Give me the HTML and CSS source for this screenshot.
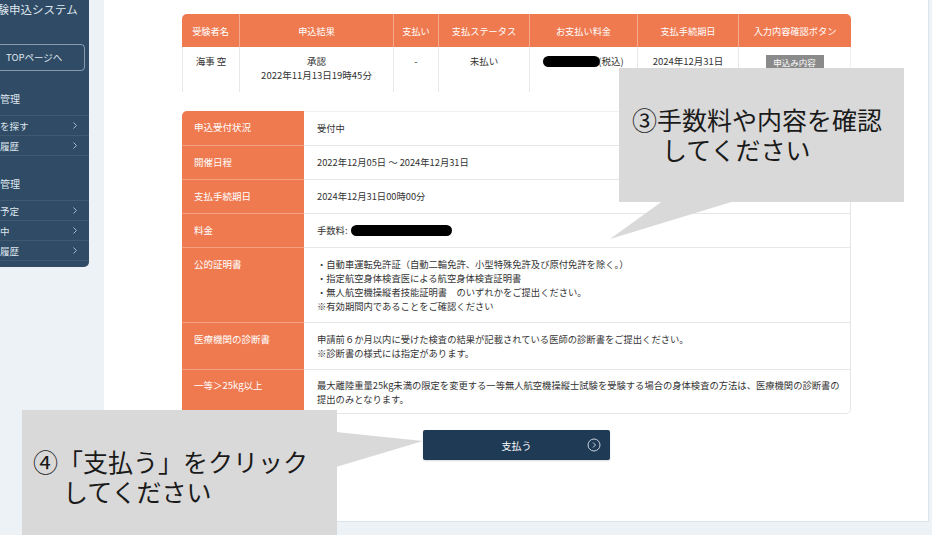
FILE: index.html
```html
<!DOCTYPE html>
<html lang="ja">
<head>
<meta charset="utf-8">
<title>試験申込システム</title>
<link rel="stylesheet" href="styles.css">
</head>
<body>
<div class="page">
  <aside class="sidebar">
    <div class="sidebar-inner">
      <div class="brand">試験申込システム</div>
      <a class="top-btn">TOPページへ</a>
      <div class="nav-heading">申込管理</div>
      <ul class="nav-list">
        <li><span>試験を探す</span><svg class="chev" viewBox="0 0 4 7" width="4" height="7"><polyline points="0.5,0.5 3.5,3.5 0.5,6.5"/></svg></li>
        <li><span>申込履歴</span><svg class="chev" viewBox="0 0 4 7" width="4" height="7"><polyline points="0.5,0.5 3.5,3.5 0.5,6.5"/></svg></li>
      </ul>
      <div class="nav-heading">受験管理</div>
      <ul class="nav-list">
        <li><span>受験予定</span><svg class="chev" viewBox="0 0 4 7" width="4" height="7"><polyline points="0.5,0.5 3.5,3.5 0.5,6.5"/></svg></li>
        <li><span>申込中</span><svg class="chev" viewBox="0 0 4 7" width="4" height="7"><polyline points="0.5,0.5 3.5,3.5 0.5,6.5"/></svg></li>
        <li><span>受験履歴</span><svg class="chev" viewBox="0 0 4 7" width="4" height="7"><polyline points="0.5,0.5 3.5,3.5 0.5,6.5"/></svg></li>
      </ul>
    </div>
  </aside>

  <main class="card">
    <table class="summary">
      <colgroup>
        <col class="c1"><col class="c2"><col class="c3"><col class="c4"><col class="c5"><col class="c6"><col class="c7">
      </colgroup>
      <thead>
        <tr>
          <th>受験者名</th>
          <th>申込結果</th>
          <th>支払い</th>
          <th>支払ステータス</th>
          <th>お支払い料金</th>
          <th>支払手続期日</th>
          <th>入力内容確認ボタン</th>
        </tr>
      </thead>
      <tbody>
        <tr>
          <td>海事 空</td>
          <td>承認<br>2022年11月13日19時45分</td>
          <td>-</td>
          <td>未払い</td>
          <td><span class="redact redact-sm"></span>(税込)</td>
          <td>2024年12月31日</td>
          <td><span class="detail-btn">申込み内容</span></td>
        </tr>
      </tbody>
    </table>

    <table class="details">
      <colgroup><col class="dl"><col class="dv"></colgroup>
      <tbody>
        <tr><th>申込受付状況</th><td>受付中</td></tr>
        <tr><th>開催日程</th><td>2022年12月05日 ～ 2024年12月31日</td></tr>
        <tr><th>支払手続期日</th><td>2024年12月31日00時00分</td></tr>
        <tr><th>料金</th><td>手数料: <span class="redact redact-lg"></span></td></tr>
        <tr class="multi"><th>公的証明書</th><td>・自動車運転免許証（自動二輪免許、小型特殊免許及び原付免許を除く。）<br>・指定航空身体検査医による航空身体検査証明書<br>・無人航空機操縦者技能証明書　のいずれかをご提出ください。<br>※有効期間内であることをご確認ください</td></tr>
        <tr class="multi"><th>医療機関の診断書</th><td>申請前６か月以内に受けた検査の結果が記載されている医師の診断書をご提出ください。<br>※診断書の様式には指定があります。</td></tr>
        <tr class="last"><th>一等＞25kg以上</th><td>最大離陸重量25kg未満の限定を変更する一等無人航空機操縦士試験を受験する場合の身体検査の方法は、医療機関の診断書の<br>提出のみとなります。</td></tr>
      </tbody>
    </table>

    <button class="pay-btn" type="button">
      <span class="pay-label">支払う</span>
      <svg class="pay-icon" viewBox="0 0 14 14" width="14" height="14"><circle cx="7" cy="7" r="6" /><polyline points="6,4.5 8.5,7 6,9.5"/></svg>
    </button>
  </main>
</div>

<svg class="tails" width="932" height="535" viewBox="0 0 932 535">
  <polygon points="664,200 738,200 610,239"/>
  <polygon points="336,432 423,441 336,467"/>
</svg>
<div class="callout callout-3">③手数料や内容を確認<span class="l2">してください</span></div>
<div class="callout callout-4">④「支払う」をクリック<span class="l2">してください</span></div>
</body>
</html>
```

FILE: styles.css
```css
* { box-sizing: border-box; }
html, body { margin: 0; padding: 0; }
body {
  width: 932px;
  height: 535px;
  overflow: hidden;
  position: relative;
  background: #edf2f7;
  font-family: "Noto Sans CJK JP", "Noto Sans", sans-serif;
  color: #333;
}
.page {
  display: flex;
  align-items: flex-start;
  gap: 15px;
}

/* Sidebar */
.sidebar {
  flex: none;
  width: 89px;
  height: 267px;
  background: #2f4b65;
  border-bottom-right-radius: 5px;
  overflow: hidden;
}
.sidebar-inner {
  margin-left: -40px;
  width: 129px;
  color: #dfe6ee;
}
.brand {
  font-size: 11.5px;
  line-height: 16px;
  padding: 1px 0 0 26px;
  white-space: nowrap;
}
.top-btn {
  display: block;
  margin: 27px 0 0 8px;
  width: 117px;
  height: 27px;
  border: 1px solid rgba(210, 222, 235, 0.55);
  border-radius: 4px;
  font-size: 9.5px;
  line-height: 25px;
  padding-left: 37px;
  white-space: nowrap;
}
.nav-heading {
  margin-top: 21px;
  padding: 0 0 9px 20px;
  font-size: 10px;
  line-height: 14px;
  white-space: nowrap;
}
.nav-list {
  list-style: none;
  margin: 0;
  padding: 0;
  border-bottom: 1px solid rgba(255, 255, 255, 0.08);
}
.nav-list li {
  display: flex;
  align-items: center;
  justify-content: space-between;
  height: 20px;
  padding: 0 12px 0 21px;
  border-top: 1px solid rgba(255, 255, 255, 0.08);
  font-size: 9.5px;
  white-space: nowrap;
}
.chev polyline {
  fill: none;
  stroke: #aab8c6;
  stroke-width: 1;
}

/* Main card */
.card {
  flex: none;
  width: 825px;
  height: 522px;
  background: #fff;
  border-right: 1px solid #dbe3ec;
  border-bottom: 1px solid #dbe3ec;
  padding: 14px 0 0 78px;
}

.summary,
.details {
  width: 669px;
  table-layout: fixed;
  border-collapse: separate;
  border-spacing: 0;
  font-size: 9.5px;
}
.summary .c1 { width: 57px; }
.summary .c2 { width: 154px; }
.summary .c3 { width: 45px; }
.summary .c4 { width: 91px; }
.summary .c5 { width: 108px; }
.summary .c6 { width: 101px; }
.summary .c7 { width: 113px; }

.summary th {
  height: 33px;
  background: #ef7a50;
  color: #fff;
  font-weight: normal;
  font-size: 9.2px;
  text-align: center;
  padding: 0;
  border-left: 1px solid rgba(255, 255, 255, 0.35);
  white-space: nowrap;
}
.summary th:first-child { border-left: none; border-top-left-radius: 5px; }
.summary th:last-child { border-top-right-radius: 5px; }
.summary td {
  height: 45px;
  vertical-align: top;
  text-align: center;
  padding: 7px 2px 0;
  line-height: 14px;
  color: #333;
  border-left: 1px solid #e8e8e8;
  white-space: nowrap;
}
.summary td:last-child { border-right: 1px solid #f0f0f0; }

.redact {
  display: inline-block;
  background: #000;
  border-radius: 6px;
  vertical-align: middle;
}
.redact-sm {
  width: 57px;
  height: 11px;
  margin-right: -2px;
  margin-top: -2px;
}
.redact-lg {
  width: 101px;
  height: 11px;
  margin-left: 1px;
  margin-top: -2px;
}
.detail-btn {
  display: inline-block;
  width: 58px;
  height: 14px;
  line-height: 14px;
  background: #8a8a8a;
  color: #fff;
  font-size: 8.5px;
  margin-top: 1px;
}

/* Details table */
.details { margin-top: 19px; }
.details .dl { width: 122px; }
.details .dv { width: 547px; }
.details th {
  background: #ef7a50;
  color: #fff;
  font-weight: normal;
  text-align: left;
  vertical-align: top;
  padding: 9px 6px 10px 12px;
  line-height: 14px;
  border-top: 1px solid rgba(255, 255, 255, 0.28);
  white-space: nowrap;
}
.details tr:first-child th { border-top: none; border-top-left-radius: 5px; }
.details td {
  vertical-align: top;
  padding: 9px 4px 10px 13px;
  line-height: 14px;
  font-size: 9.3px;
  color: #333;
  white-space: nowrap;
  border-top: 1px solid #e6e6e6;
  border-right: 1px solid #e6e6e6;
}
.details tr.multi th,
.details tr.multi td {
  padding-bottom: 9px;
}
.details tr.last th,
.details tr.last td {
  padding-top: 8px;
  padding-bottom: 7px;
}
.details tr:first-child td { border-top: 1px solid #f2f2f2; }
.details tr.last td {
  border-bottom: 1px solid #e6e6e6;
  border-bottom-right-radius: 5px;
}

/* Pay button */
.pay-btn {
  display: grid;
  grid-template-columns: 1fr auto 1fr;
  align-items: center;
  width: 187px;
  height: 30px;
  margin: 16px 0 0 241px;
  padding: 0 9px 0 0;
  background: #1e3a55;
  border: none;
  border-radius: 2px;
  color: #fff;
  font-family: "Noto Sans CJK JP", "Noto Sans", sans-serif;
  font-size: 10px;
  box-shadow: 0 1px 2px rgba(0, 0, 0, 0.15);
}
.pay-label {
  grid-column: 2;
  padding-left: 9px;
}
.pay-icon {
  grid-column: 3;
  justify-self: end;
}
.pay-icon circle,
.pay-icon polyline {
  fill: none;
  stroke: #c9d3dd;
  stroke-width: 1;
}

/* Callouts */
.tails {
  position: absolute;
  left: 0;
  top: 0;
  pointer-events: none;
}
.tails polygon { fill: #d9d9d9; }
.callout {
  position: absolute;
  background: #d9d9d9;
  color: #1a1a1a;
  font-family: "Noto Sans CJK JP", "Noto Sans", sans-serif;
  font-size: 25px;
  line-height: 30px;
  white-space: nowrap;
}
.callout .l2 {
  display: block;
  padding-left: 30px;
}
.callout-3 {
  left: 619px;
  top: 68px;
  width: 285px;
  height: 134px;
  padding: 36px 0 0 13px;
}
.callout-4 {
  left: 22px;
  top: 410px;
  width: 315px;
  height: 125px;
  padding: 36px 0 0 11px;
}
```
